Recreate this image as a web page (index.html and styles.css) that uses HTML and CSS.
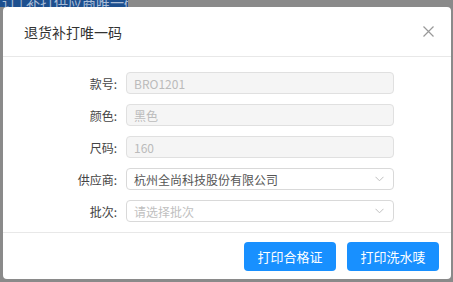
FILE: index.html
```html
<!DOCTYPE html>
<html lang="zh-CN">
  <head>
    <meta charset="UTF-8" />
    <meta name="viewport" content="width=device-width, initial-scale=1.0" />
    <title>退货补打唯一码</title>

    <link rel="stylesheet" href="styles.css">
  </head>

  <body>
    <div class="page">
      <div class="tab-bar">
        <span class="tab">订 | 补打供应商唯一码</span>
      </div>
    </div>

    <!-- 弹窗 -->
    <div class="mask">
      <div class="modal">
        <div class="modal-header">
          <span class="modal-title">退货补打唯一码</span>
          <button class="modal-close" aria-label="关闭">
            <svg width="11" height="11" viewBox="0 0 11 11">
              <path d="M0.5 0.5 L10.5 10.5 M10.5 0.5 L0.5 10.5" stroke="#999" stroke-width="1.2" fill="none" />
            </svg>
          </button>
        </div>

        <div class="modal-body">
          <div class="form-row">
            <label class="form-label">款号:</label>
            <div class="form-input disabled">BRO1201</div>
          </div>
          <div class="form-row">
            <label class="form-label">颜色:</label>
            <div class="form-input disabled">黑色</div>
          </div>
          <div class="form-row">
            <label class="form-label">尺码:</label>
            <div class="form-input disabled">160</div>
          </div>
          <div class="form-row">
            <label class="form-label">供应商:</label>
            <div class="form-input select">
              <span class="value">杭州全尚科技股份有限公司</span>
              <svg class="arrow" width="9" height="6" viewBox="0 0 9 6">
                <path d="M0.5 0.8 L4.5 4.8 L8.5 0.8" stroke="#bfbfbf" stroke-width="1" fill="none" />
              </svg>
            </div>
          </div>
          <div class="form-row">
            <label class="form-label">批次:</label>
            <div class="form-input select">
              <span class="placeholder">请选择批次</span>
              <svg class="arrow" width="9" height="6" viewBox="0 0 9 6">
                <path d="M0.5 0.8 L4.5 4.8 L8.5 0.8" stroke="#bfbfbf" stroke-width="1" fill="none" />
              </svg>
            </div>
          </div>
        </div>

        <div class="modal-footer">
          <button class="btn-primary">打印合格证</button>
          <button class="btn-primary">打印洗水唛</button>
        </div>
      </div>
    </div>
  </body>
</html>
```

FILE: styles.css
```css
* {
  box-sizing: border-box;
}

body {
  margin: 0;
  height: 100vh;
  overflow: hidden;
  background-color: #8a8a8a;
  font-family: "Noto Sans CJK SC", "Noto Sans", sans-serif;
}

.page {
  height: 100%;
}

.tab-bar {
  display: flex;
  height: 7px;
  overflow: hidden;
}

.tab {
  display: block;
  width: 128px;
  height: 7px;
  padding-left: 2px;
  background-color: #1d4f8e;
  color: #a9bcd6;
  font-size: 14px;
  line-height: 4px;
  white-space: nowrap;
  overflow: hidden;
}

.mask {
  position: absolute;
  inset: 0;
}

.modal {
  position: absolute;
  left: 3px;
  top: 7px;
  width: 448px;
  height: 272px;
  display: flex;
  flex-direction: column;
  background-color: #fff;
  border-radius: 4px;
}

.modal-header {
  display: flex;
  align-items: center;
  justify-content: space-between;
  height: 50px;
  padding: 0 16px 0 21px;
  border-bottom: 1px solid #e8e8e8;
}

.modal-title {
  font-size: 14px;
  color: #333;
}

.modal-close {
  display: flex;
  align-items: center;
  justify-content: center;
  width: 14px;
  height: 14px;
  padding: 0;
  background: none;
  border: none;
  cursor: pointer;
}

.modal-body {
  flex: 1;
  display: flex;
  flex-direction: column;
  gap: 10px;
  padding: 15px 0 0;
}

.form-row {
  display: flex;
  align-items: center;
  height: 22px;
}

.form-label {
  width: 116px;
  padding-right: 2px;
  text-align: right;
  font-size: 12px;
  color: #444;
}

.form-input {
  display: flex;
  align-items: center;
  justify-content: space-between;
  width: 268px;
  height: 22px;
  margin-left: 7px;
  padding: 0 9px 0 7px;
  border: 1px solid #d9d9d9;
  border-radius: 4px;
  font-size: 12px;
  color: #555;
}

.form-input.disabled {
  background-color: #f5f5f5;
  border-color: #e0e0e0;
  color: #bbb;
}

.form-input .placeholder {
  color: #bfbfbf;
}

.modal-footer {
  display: flex;
  justify-content: flex-end;
  gap: 11px;
  height: 47px;
  padding: 9px 12px 0;
  border-top: 1px solid #e8e8e8;
}

.btn-primary {
  width: 92px;
  height: 29px;
  padding: 0;
  background-color: #1890ff;
  color: #fff;
  border: none;
  border-radius: 4px;
  font-family: inherit;
  font-size: 13px;
  cursor: pointer;
}

.btn-primary:hover {
  background-color: #40a9ff;
}
```
